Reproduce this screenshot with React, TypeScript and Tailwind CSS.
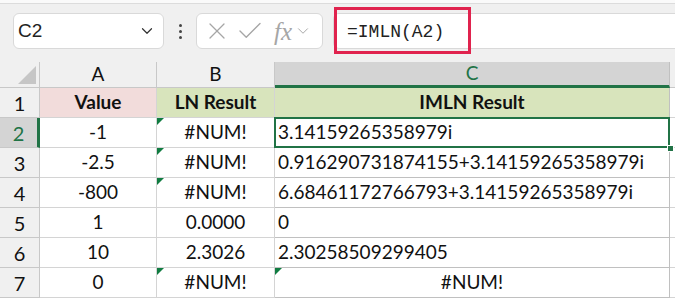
import { ChevronDown, X, Check } from 'lucide-react';

const rows = [
  { n: 2, a: '-1', b: '#NUM!', c: '3.14159265358979i', bErr: true },
  { n: 3, a: '-2.5', b: '#NUM!', c: '0.916290731874155+3.14159265358979i', bErr: true },
  { n: 4, a: '-800', b: '#NUM!', c: '6.68461172766793+3.14159265358979i', bErr: true },
  { n: 5, a: '1', b: '0.0000', c: '0' },
  { n: 6, a: '10', b: '2.3026', c: '2.30258509299405' },
  { n: 7, a: '0', b: '#NUM!', c: '#NUM!', bErr: true, cErr: true },
];

function ErrTri() {
  return (
    <span className="absolute left-0 top-0 w-0 h-0 border-t-[7px] border-r-[7px] border-t-[#107c41] border-r-transparent" />
  );
}

const font = "font-['Lato','Open_Sans',sans-serif]";

export default function App() {
  return (
    <div className={`w-[675px] h-[298px] overflow-hidden bg-white ${font}`}>
      {/* Formula bar area */}
      <div className="h-[62px] bg-[#f0f0f0] border-t-[3px] border-[#fafafa] relative">
        <div className="absolute left-0 right-0 top-0 border-t border-[#dcdcdc]" />
        <div className="flex items-center pl-[13px] pt-[10px]">
          <div className="w-[151px] h-[36px] bg-white border border-[#d9d9d9] rounded-md flex items-center justify-between pl-[4px] pr-[7px]">
            <span className="text-[19px] text-[#222] font-['Liberation_Sans',sans-serif]">C2</span>
            <ChevronDown className="w-[18px] h-[18px] text-[#333]" strokeWidth={1.6} />
          </div>
          <div className="w-[32px] flex flex-col items-center gap-[3px]">
            <span className="w-[3px] h-[3px] rounded-full bg-[#444]" />
            <span className="w-[3px] h-[3px] rounded-full bg-[#444]" />
            <span className="w-[3px] h-[3px] rounded-full bg-[#444]" />
          </div>
          <div className="w-[127px] h-[36px] bg-white border border-[#d9d9d9] rounded-md flex items-center pl-[6px] text-[#a6a6a6]">
            <X className="w-[28px] h-[28px]" strokeWidth={1.1} />
            <Check className="w-[30px] h-[30px] ml-[4px]" strokeWidth={1.1} />
            <span className="ml-[9px] text-[25px] italic font-['Liberation_Serif',serif] leading-none">fx</span>
            <ChevronDown className="w-[18px] h-[18px] ml-[2px]" strokeWidth={1.3} />
          </div>
          <div className="flex-1 h-[36px] ml-[10px] bg-white border-y border-l border-[#d9d9d9] rounded-l-md relative">
            <div className="absolute left-[0px] top-[-7px] w-[137px] h-[47px] border-[3px] border-[#e0234e]" />
            <span className="absolute left-[13px] top-[5px] text-[18px] text-[#222] font-['Liberation_Mono',monospace]">=IMLN(A2)</span>
          </div>
        </div>
      </div>

      {/* Grid */}
      <div className="grid grid-cols-[40px_117px_118px_395px_5px] text-[19px] text-[#111]">
        {/* column headers */}
        <div className="h-[26px] bg-[#f0f0f0] border-r border-b border-[#c8c8c8] relative">
          <span className="absolute right-[3px] bottom-[3px] w-0 h-0 border-l-[18px] border-b-[18px] border-l-transparent border-b-[#c6c6c6]" />
        </div>
        <div className="h-[26px] bg-[#f0f0f0] border-r border-b border-[#c8c8c8] flex items-center justify-center">A</div>
        <div className="h-[26px] bg-[#f0f0f0] border-r border-b border-[#c8c8c8] flex items-center justify-center">B</div>
        <div className="h-[26px] bg-[#d4d4d4] border-r border-[#c0c0c0] border-b-[3px] border-b-[#217346] flex items-center justify-center text-[#217346]">C</div>
        <div className="h-[26px] bg-[#f0f0f0] border-b border-[#c8c8c8]" />

        {/* row 1 */}
        <div className="h-[30px] bg-[#f0f0f0] border-r border-b border-[#c8c8c8] flex items-center justify-center text-[20px]">1</div>
        <div className="h-[30px] bg-[#f2dcdb] border-r border-b border-[#d4d4d4] flex items-center justify-center font-bold">Value</div>
        <div className="h-[30px] bg-[#d8e4bc] border-r border-b border-[#d4d4d4] flex items-center justify-center font-bold">LN Result</div>
        <div className="h-[30px] bg-[#d8e4bc] border-r border-b border-[#c0c0c0] flex items-center justify-center font-bold">IMLN Result</div>
        <div className="h-[30px] border-b border-[#d4d4d4]" />

        {rows.map((r) => {
          const sel = r.n === 2;
          return (
            <div key={r.n} className="contents">
              <div
                className={`h-[30px] border-b border-[#c8c8c8] flex items-center justify-center text-[20px] ${
                  sel ? 'bg-[#d4d4d4] text-[#217346] border-r-[3px] border-r-[#217346]' : 'bg-[#f0f0f0] border-r'
                }`}
              >
                {r.n}
              </div>
              <div className="h-[30px] border-r border-b border-[#d4d4d4] flex items-center justify-center">{r.a}</div>
              <div className="h-[30px] border-r border-b border-[#d4d4d4] flex items-center justify-center relative">
                {r.bErr && <ErrTri />}
                {r.b}
              </div>
              <div
                className={`h-[30px] border-r border-b border-[#c0c0c0] flex items-center relative ${
                  r.cErr ? 'justify-center' : 'pl-[3px]'
                }`}
              >
                {r.cErr && <ErrTri />}
                {sel && <span className="absolute inset-[-1px] border-[2px] border-[#217346] pointer-events-none" />}
                {sel && <span className="absolute right-[-5px] bottom-[-5px] w-[7px] h-[7px] bg-[#217346] border border-white z-10" />}
                {r.c}
              </div>
              <div className="h-[30px] border-b border-[#d4d4d4]" />
            </div>
          );
        })}
      </div>
    </div>
  );
}
